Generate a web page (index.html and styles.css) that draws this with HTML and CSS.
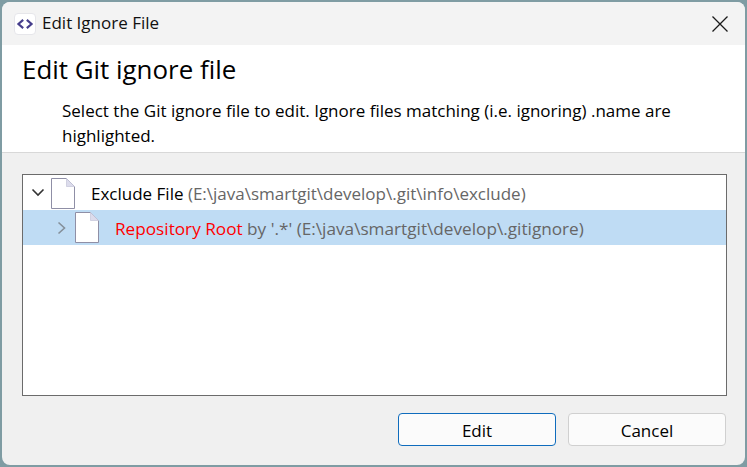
FILE: index.html
```html
<!DOCTYPE html>
<html lang="en">
<head>
  <meta charset="UTF-8" />
  <title>Edit Ignore File</title>
  <link rel="stylesheet" href="styles.css">
</head>
<body>
  <div class="window">
    <div class="titlebar">
      <span class="app-icon">
        <svg width="22" height="22" viewBox="0 0 22 22"><path d="M9 6.5 L3.8 11 L9 15.5 M13 6.5 L18.2 11 L13 15.5" fill="none" stroke="#463f8c" stroke-width="2.4"/></svg>
      </span>
      <span class="title">Edit Ignore File</span>
      <svg class="close" width="16" height="16" viewBox="0 0 16 16"><path d="M.5 .5 L15.5 15.5 M15.5 .5 L.5 15.5" stroke="#1a1a1a" stroke-width="1.3"/></svg>
    </div>

    <div class="header">
      <h1>Edit Git ignore file</h1>
      <p>Select the Git ignore file to edit. Ignore files matching (i.e. ignoring) .name are highlighted.</p>
    </div>

    <div class="content">
      <div class="tree">
        <div class="row">
          <svg class="arrow" width="14" height="10" viewBox="0 0 14 10"><path d="M1.5 1.5 L7 7 L12.5 1.5" fill="none" stroke="#333" stroke-width="1.6"/></svg>
          <svg class="file" width="24" height="31" viewBox="0 0 24 31"><path d="M.5 .5 H15.5 L23.5 8.5 V30.5 H.5 Z" fill="#fff" stroke="#8f8fa6"/><path d="M15.5 .5 V8.5 H23.5 Z" fill="#dcdcec" stroke="#c4c4d8" stroke-width=".7"/></svg>
          <span class="label">Exclude File <span class="path">(E:\java\smartgit\develop\.git\info\exclude)</span></span>
        </div>
        <div class="row row-child selected">
          <svg class="arrow" width="10" height="14" viewBox="0 0 10 14"><path d="M1.5 1.5 L7.5 7 L1.5 12.5" fill="none" stroke="#85909a" stroke-width="1.6"/></svg>
          <svg class="file" width="24" height="31" viewBox="0 0 24 31"><path d="M.5 .5 H15.5 L23.5 8.5 V30.5 H.5 Z" fill="#fff" stroke="#8f8fa6"/><path d="M15.5 .5 V8.5 H23.5 Z" fill="#dcdcec" stroke="#c4c4d8" stroke-width=".7"/></svg>
          <span class="label"><span class="match">Repository Root</span> <span class="path">by '.*' (E:\java\smartgit\develop\.gitignore)</span></span>
        </div>
      </div>
      <div class="buttons">
        <button class="btn btn-default">Edit</button>
        <button class="btn">Cancel</button>
      </div>
    </div>
  </div>
</body>
</html>
```

FILE: styles.css
```css
body {
  margin: 0;
  padding: 2px;
  height: 467px;
  box-sizing: border-box;
  overflow: hidden;
  background: #7f9ca3;
  font-family: "Open Sans", "Noto Sans", sans-serif;
  color: #000;
}
.window {
  height: 463px;
  width: 743px;
  display: flex;
  flex-direction: column;
  border-radius: 8px;
  overflow: hidden;
  background: #f0f0f0;
}
.titlebar {
  flex: none;
  height: 43px;
  display: flex;
  align-items: center;
  padding: 0 17px 0 12px;
  background: #f3f3f3;
}
.app-icon {
  width: 22px;
  height: 22px;
  background: #fff;
  border: 1px solid #e6e6ea;
  border-radius: 4px;
  box-sizing: border-box;
  display: flex;
  align-items: center;
  justify-content: center;
  margin-right: 6px;
}
.title {
  flex: 1;
  font-size: 17px;
  color: #111;
  padding-bottom: 2px;
}
.header {
  flex: none;
  height: 108px;
  box-sizing: border-box;
  background: #fff;
  border-bottom: 1px solid #d8d8d8;
  padding: 6px 20px 0;
}
h1 {
  margin: 0;
  font-size: 25.9px;
  font-weight: 400;
  line-height: 36px;
}
p {
  margin: 11px 40px 0;
  font-size: 17px;
  line-height: 25px;
  max-width: 630px;
}
.content {
  flex: 1;
  display: flex;
  flex-direction: column;
  padding: 21px 18px 19px 20px;
}
.tree {
  flex: 1;
  background: #fff;
  border: 1px solid #6b6b6b;
  padding-top: 1px;
  font-size: 17px;
}
.row {
  height: 34px;
  display: flex;
  align-items: center;
  padding-left: 8px;
}
.row .arrow { margin-right: 6px; }
.row .label { margin-left: 16px; white-space: nowrap; }
.row-child { padding-left: 34px; height: 35px; font-size: 17.2px; }
.row-child .arrow { margin-right: 8px; }
.row-child .label { padding-top: 2px; }
.selected { background: #bfdcf4; }
.path { color: #666; }
.match { color: #ff0000; }
.buttons {
  flex: none;
  display: flex;
  justify-content: flex-end;
  gap: 12px;
  margin: 17px 1px 0 0;
}
.btn {
  width: 158px;
  height: 33px;
  padding: 1px 0 0;
  background: #fbfbfb;
  border: 1px solid #d0d0d0;
  border-radius: 4px;
  font: inherit;
  font-size: 17px;
  color: #000;
}
.btn-default {
  border-color: #0f6cbd;
}
```
